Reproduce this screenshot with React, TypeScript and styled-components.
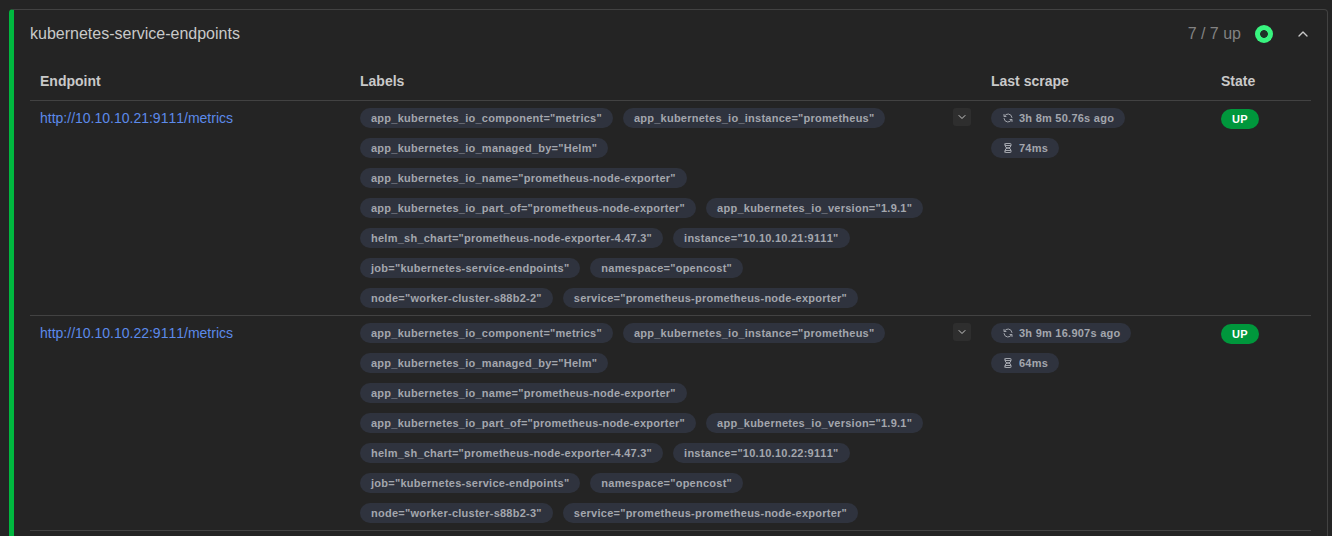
import React from 'react'
import styled, { createGlobalStyle } from 'styled-components'
import { TbChevronDown, TbChevronUp, TbRefresh } from 'react-icons/tb'

const GlobalStyle = createGlobalStyle`
  html, body {
    margin: 0;
    height: 100%;
    overflow: hidden;
    background: #242424;
  }
  body {
    font-family: 'Liberation Sans', Arial, sans-serif;
  }
`

type Target = {
  url: string
  labels: string[]
  scrape: string
  duration: string
}

const makeLabels = (ip: string, node: string) => [
  'app_kubernetes_io_component="metrics"',
  'app_kubernetes_io_instance="prometheus"',
  'app_kubernetes_io_managed_by="Helm"',
  'app_kubernetes_io_name="prometheus-node-exporter"',
  'app_kubernetes_io_part_of="prometheus-node-exporter"',
  'app_kubernetes_io_version="1.9.1"',
  'helm_sh_chart="prometheus-node-exporter-4.47.3"',
  `instance="${ip}:9111"`,
  'job="kubernetes-service-endpoints"',
  'namespace="opencost"',
  `node="${node}"`,
  'service="prometheus-prometheus-node-exporter"',
]

const targets: Target[] = [
  {
    url: 'http://10.10.10.21:9111/metrics',
    labels: makeLabels('10.10.10.21', 'worker-cluster-s88b2-2'),
    scrape: '3h 8m 50.76s ago',
    duration: '74ms',
  },
  {
    url: 'http://10.10.10.22:9111/metrics',
    labels: makeLabels('10.10.10.22', 'worker-cluster-s88b2-3'),
    scrape: '3h 9m 16.907s ago',
    duration: '64ms',
  },
]

const HourglassIcon = () => (
  <svg
    width="12"
    height="12"
    viewBox="0 0 24 24"
    fill="none"
    stroke="currentColor"
    strokeWidth="2"
    strokeLinecap="round"
    strokeLinejoin="round"
  >
    <path d="M6.5 7h11" />
    <path d="M6.5 17h11" />
    <path d="M6 20v-2a6 6 0 1 1 12 0v2a1 1 0 0 1 -1 1h-10a1 1 0 0 1 -1 -1z" />
    <path d="M6 4v2a6 6 0 1 0 12 0v-2a1 1 0 0 0 -1 -1h-10a1 1 0 0 0 -1 1z" />
  </svg>
)

const App = () => {
  return (
    <Page>
      <GlobalStyle />
      <Panel>
        <PanelHeader>
          <Title>kubernetes-service-endpoints</Title>
          <Summary>7 / 7 up</Summary>
          <Ring />
          <Collapse>
            <TbChevronUp size={16} />
          </Collapse>
        </PanelHeader>
        <Table>
          <thead>
            <tr>
              <Th $width={320}>Endpoint</Th>
              <Th $width={631}>Labels</Th>
              <Th $width={230}>Last scrape</Th>
              <Th $width={100}>State</Th>
            </tr>
          </thead>
          <tbody>
            {targets.map((target) => (
              <tr key={target.url}>
                <Td>
                  <EndpointLink href="#">{target.url}</EndpointLink>
                </Td>
                <Td>
                  <LabelCell>
                    <BadgeList>
                      {target.labels.map((label) => (
                        <Pill key={label}>{label}</Pill>
                      ))}
                    </BadgeList>
                    <ExpandButton>
                      <TbChevronDown size={12} />
                    </ExpandButton>
                  </LabelCell>
                </Td>
                <Td>
                  <ScrapeList>
                    <Pill>
                      <TbRefresh size={12} />
                      {target.scrape}
                    </Pill>
                    <Pill>
                      <HourglassIcon />
                      {target.duration}
                    </Pill>
                  </ScrapeList>
                </Td>
                <Td>
                  <StateBadge>UP</StateBadge>
                </Td>
              </tr>
            ))}
          </tbody>
        </Table>
      </Panel>
    </Page>
  )
}

export default App

const Page = styled.div`
  padding: 9px 4px 0 9px;
`
const Panel = styled.section`
  box-sizing: border-box;
  min-height: 560px;
  background: #242424;
  border: 1px solid #424242;
  border-left: 5px solid #00b83f;
  border-radius: 4px;
  padding: 0 16px;
`
const PanelHeader = styled.div`
  display: flex;
  align-items: center;
  height: 48px;
`
const Title = styled.div`
  flex: 1;
  font-size: 16px;
  color: #c9c9c9;
`
const Summary = styled.div`
  font-size: 16px;
  color: #828282;
`
const Ring = styled.span`
  width: 18px;
  height: 18px;
  margin-left: 14px;
  border-radius: 50%;
  background: radial-gradient(circle, #1f3328 3.5px, #38f47f 4.2px);
`
const Collapse = styled.span`
  display: flex;
  width: 16px;
  margin-left: 22px;
  color: #c9c9c9;
`
const Table = styled.table`
  width: 1281px;
  table-layout: fixed;
  border-collapse: collapse;
  font-size: 14px;
  color: #c9c9c9;
`
const Th = styled.th<{ $width: number }>`
  width: ${(p) => p.$width}px;
  box-sizing: border-box;
  height: 42px;
  padding: 5px 10px 0;
  text-align: left;
  font-weight: 700;
  border-bottom: 1px solid #424242;
`
const Td = styled.td`
  padding: 7px 10px;
  vertical-align: top;
  border-bottom: 1px solid #424242;
`
const EndpointLink = styled.a`
  display: block;
  line-height: 20px;
  color: #5c8aea;
  text-decoration: none;
  font-kerning: none;
`
const LabelCell = styled.div`
  display: flex;
  justify-content: space-between;
  align-items: flex-start;
`
const BadgeList = styled.div`
  display: flex;
  flex-wrap: wrap;
  gap: 10px;
  width: 580px;
`
const Pill = styled.span`
  display: inline-flex;
  align-items: center;
  gap: 5px;
  height: 20px;
  padding: 0 11px;
  border-radius: 10px;
  background: #2f333e;
  color: #a3a6ad;
  font-size: 11px;
  font-weight: 700;
  letter-spacing: 0.25px;
  white-space: nowrap;
  font-kerning: none;
`
const ExpandButton = styled.span`
  display: flex;
  align-items: center;
  justify-content: center;
  width: 18px;
  height: 18px;
  border-radius: 3px;
  background: #2e2e2e;
  color: #c9c9c9;
`
const ScrapeList = styled.div`
  display: flex;
  flex-direction: column;
  align-items: flex-start;
  gap: 10px;
`
const StateBadge = styled.span`
  display: inline-flex;
  align-items: center;
  height: 20px;
  margin-top: 1px;
  padding: 0 11px;
  border-radius: 10px;
  background: #00973c;
  color: #ffffff;
  font-size: 11px;
  font-weight: 700;
  letter-spacing: 0.25px;
`
